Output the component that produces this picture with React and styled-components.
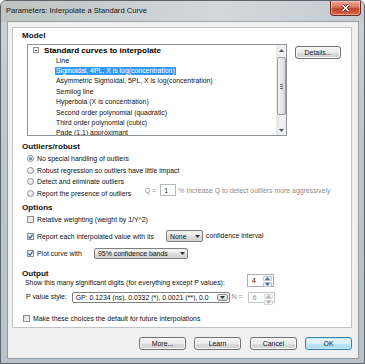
import React from "react";
import styled, { createGlobalStyle } from "styled-components";

const GlobalStyle = createGlobalStyle`
  html, body {
    margin: 0;
    padding: 0;
    background: #ffffff;
  }
  body {
    font-family: "Liberation Sans", Arial, sans-serif;
    color: #000;
  }
`;

const Window = styled.div`
  width: 365px;
  height: 364px;
  box-sizing: border-box;
  border: 1px solid #5d646b;
  border-radius: 6px 6px 0 0;
  background: linear-gradient(180deg, #cdd3d8 0%, #c0c7ce 30%, #b9c1c9 100%);
  display: flex;
  flex-direction: column;
  padding: 0 6px 5px 7px;
  overflow: hidden;
`;

const TitleBar = styled.div`
  height: 21px;
  margin: 0 -6px 0 -7px;
  padding: 0 3px 0 5px;
  display: flex;
  align-items: flex-start;
  justify-content: space-between;
  background: linear-gradient(90deg, #bcc5bf 0%, #c9cfd2 35%, #d3d8dc 60%, #c4cbd1 100%);
`;

const Title = styled.div`
  font-size: 7.6px;
  line-height: 20px;
  color: #111;
`;

const CloseButton = styled.div`
  width: 31px;
  height: 15px;
  box-sizing: border-box;
  border: 1px solid #6e2a1d;
  border-top: none;
  border-radius: 0 0 4px 4px;
  background: linear-gradient(180deg, #eaa898 0%, #d97b63 42%, #c5432a 56%, #d9654c 100%);
  box-shadow: inset 0 0 0 1px rgba(255, 215, 205, 0.55);
  display: flex;
  align-items: center;
  justify-content: center;
`;

const Client = styled.div`
  flex: 1;
  background: #f0f0f0;
  box-shadow: 0 0 0 1px rgba(70, 80, 90, 0.35);
  padding: 5px 6px 0 4px;
  display: flex;
  flex-direction: column;
`;

const Panel = styled.div`
  height: 301px;
  box-sizing: border-box;
  background: #ffffff;
  border: 1px solid #bfc4c9;
  padding: 3px 0 0 9px;
  display: flex;
  flex-direction: column;
  font-size: 6.9px;
`;

const Heading = styled.div`
  font-weight: bold;
  font-size: 8.1px;
  line-height: ${(p) => p.$lh || 10}px;
  height: ${(p) => p.$lh || 10}px;
  color: #111;
  margin-top: ${(p) => p.$mt || 0}px;
`;

const ModelRow = styled.div`
  display: flex;
  align-items: flex-start;
  margin: 3px 0 0 5px;
`;

const ListBox = styled.div`
  width: 260px;
  height: 92px;
  box-sizing: border-box;
  border: 1px solid #8e949b;
  display: flex;
  background: #fff;
`;

const ListContent = styled.div`
  flex: 1;
  overflow: hidden;
`;

const TreeRoot = styled.div`
  height: 10.4px;
  display: flex;
  align-items: center;
  padding-left: 5px;
  font-weight: bold;
  font-size: 8.1px;
`;

const Expander = styled.span`
  width: 6px;
  height: 6px;
  box-sizing: border-box;
  border: 1px solid #919191;
  margin-right: 5px;
  display: flex;
  align-items: center;
  justify-content: center;
  &::after {
    content: "";
    width: 2px;
    height: 1px;
    background: #333;
  }
`;

const TreeItem = styled.div`
  height: 10.4px;
  display: flex;
  align-items: center;
  padding-left: 27px;
  white-space: nowrap;
`;

const ItemText = styled.span`
  padding: 0 1px;
  line-height: 8px;
  background: ${(p) => (p.$selected ? "#3399ff" : "transparent")};
  color: ${(p) => (p.$selected ? "#ffffff" : "#111")};
`;

const ScrollBar = styled.div`
  width: 9px;
  display: flex;
  flex-direction: column;
  background: linear-gradient(90deg, #e3e3e3, #f2f2f2 40%, #eeeeee);
  border-left: 1px solid #ececec;
`;

const ScrollArrow = styled.div`
  height: 10px;
  display: flex;
  align-items: center;
  justify-content: center;
`;

const Thumb = styled.div`
  height: 58px;
  margin: 2px 0 0;
  box-sizing: border-box;
  border: 1px solid #9a9a9a;
  border-radius: 2px;
  background: linear-gradient(90deg, #f4f4f4, #e6e6e6 50%, #d6d6d6);
  display: flex;
  flex-direction: column;
  align-items: center;
  justify-content: center;
  gap: 1px;
`;

const Grip = styled.span`
  width: 3px;
  height: 1px;
  background: #6e6e6e;
`;

const Track = styled.div`
  flex: 1;
`;

const Button = styled.div`
  width: ${(p) => p.$w || 47}px;
  height: 13px;
  box-sizing: border-box;
  border: 1px solid ${(p) => (p.$default ? "#3c7fb1" : "#707070")};
  border-radius: 3px;
  background: ${(p) =>
    p.$default
      ? "linear-gradient(180deg, #eaf6fd 0%, #d9f0fc 50%, #bee6fd 50%, #a7d9f5 100%)"
      : "linear-gradient(180deg, #f3f3f3 0%, #ebebeb 50%, #dddddd 50%, #cfcfcf 100%)"};
  box-shadow: inset 0 0 0 1px ${(p) => (p.$default ? "#c9eafc" : "#fbfbfb")};
  display: flex;
  align-items: center;
  justify-content: center;
  font-size: 6.9px;
  color: #111;
  margin: ${(p) => p.$m || "0"};
`;

const Choices = styled.div`
  display: flex;
  flex-direction: column;
  margin-top: ${(p) => p.$mt || 0}px;
`;

const ChoiceRow = styled.div`
  display: flex;
  align-items: center;
  height: ${(p) => p.$h || 11.5}px;
  margin-top: ${(p) => p.$mt || 0}px;
  padding-left: ${(p) => (p.$pl === undefined ? 5 : p.$pl)}px;
  white-space: nowrap;
`;

const Radio = styled.span`
  width: 7px;
  height: 7px;
  box-sizing: border-box;
  border-radius: 50%;
  border: 1px solid #8a8f94;
  background: radial-gradient(circle at 40% 35%, #ffffff, #dcdcdc);
  display: flex;
  align-items: center;
  justify-content: center;
  flex-shrink: 0;
  &::after {
    content: "";
    width: 3px;
    height: 3px;
    border-radius: 50%;
    background: ${(p) => (p.$on ? "radial-gradient(circle at 40% 35%, #7ab3e8, #1c5a96)" : "transparent")};
  }
`;

const Check = styled.span`
  width: 7px;
  height: 7px;
  box-sizing: border-box;
  border: 1px solid #8a8f94;
  background: linear-gradient(135deg, #dedede, #f8f8f8);
  display: flex;
  align-items: center;
  justify-content: center;
  flex-shrink: 0;
`;

const Label = styled.span`
  margin-left: 3px;
  color: ${(p) => (p.$disabled ? "#8d8d8d" : "#111")};
  width: ${(p) => (p.$w ? `${p.$w}px` : "auto")};
  flex-shrink: 0;
`;

const Plain = styled.span`
  color: ${(p) => (p.$disabled ? "#8d8d8d" : "#111")};
  margin-left: ${(p) => p.$ml || 0}px;
  width: ${(p) => (p.$w ? `${p.$w}px` : "auto")};
  line-height: 8px;
  align-self: ${(p) => (p.$bottom ? "flex-end" : "center")};
  flex-shrink: 0;
`;

const QGroup = styled.div`
  display: flex;
  align-items: center;
  margin-bottom: 6px;
  color: #8d8d8d;
`;

const SmallBox = styled.span`
  width: ${(p) => p.$w}px;
  height: 12px;
  box-sizing: border-box;
  border: 1px solid #b5b9bd;
  background: #fff;
  display: flex;
  align-items: center;
  padding-left: 3px;
  margin: 0 2px 0 ${(p) => p.$ml || 0}px;
  color: #333;
`;

const Combo = styled.div`
  width: ${(p) => p.$w}px;
  height: ${(p) => p.$h || 12}px;
  box-sizing: border-box;
  border: 1px solid #7f7f7f;
  border-radius: 2px;
  background: ${(p) =>
    p.$field
      ? "#ffffff"
      : "linear-gradient(180deg, #f4f4f4 0%, #ebebeb 50%, #dedede 50%, #d2d2d2 100%)"};
  display: flex;
  align-items: center;
  margin-left: ${(p) => p.$ml || 0}px;
  flex-shrink: 0;
  overflow: hidden;
`;

const ComboText = styled.span`
  flex: 1;
  padding-left: 3px;
  overflow: hidden;
  white-space: nowrap;
  color: #111;
`;

const ComboArrow = styled.span`
  width: ${(p) => (p.$field ? 9 : 10)}px;
  align-self: stretch;
  display: flex;
  align-items: center;
  justify-content: center;
  margin: ${(p) => (p.$field ? "1px" : "0")};
  border-radius: 2px;
  border: ${(p) => (p.$field ? "1px solid #8c8c8c" : "none")};
  background: ${(p) =>
    p.$field ? "linear-gradient(180deg, #f4f4f4, #e2e2e2 50%, #d3d3d3)" : "transparent"};
`;

const Spinner = styled.div`
  width: 27px;
  height: ${(p) => p.$h}px;
  box-sizing: border-box;
  border: 1px solid ${(p) => (p.$disabled ? "#c3c6c9" : "#abadb3")};
  background: #fff;
  display: flex;
  margin-left: ${(p) => p.$ml || 0}px;
  flex-shrink: 0;
`;

const SpinValue = styled.span`
  flex: 1;
  display: flex;
  align-items: center;
  padding-left: 4px;
  color: ${(p) => (p.$disabled ? "#8d8d8d" : "#111")};
`;

const SpinButtons = styled.div`
  width: 9px;
  display: flex;
  flex-direction: column;
  gap: 1px;
  padding: 1px;
`;

const SpinButton = styled.span`
  flex: 1;
  border: 1px solid ${(p) => (p.$disabled ? "#d6d6d6" : "#b8c9d9")};
  border-radius: 1px;
  background: ${(p) =>
    p.$disabled ? "#f4f4f4" : "linear-gradient(180deg, #f2f8fd, #dbe9f6)"};
  display: flex;
  align-items: center;
  justify-content: center;
`;

const FormRow = styled.div`
  display: flex;
  align-items: center;
  height: ${(p) => p.$h}px;
  margin-top: ${(p) => p.$mt || 0}px;
  padding-left: ${(p) => p.$pl || 0}px;
  white-space: nowrap;
`;

const ButtonRow = styled.div`
  display: flex;
  justify-content: flex-end;
  margin-top: 9px;
`;

const Tri = ({ up, color = "#333" }) => (
  <svg width="5" height="3" viewBox="0 0 5 3">
    <path d={up ? "M0 3 L2.5 0 L5 3 Z" : "M0 0 L5 0 L2.5 3 Z"} fill={color} />
  </svg>
);

const CheckMark = () => (
  <svg width="5" height="5" viewBox="0 0 5 5">
    <path d="M0.5 2.6 L2 4.2 L4.6 0.6" fill="none" stroke="#2b4f8e" strokeWidth="1.1" />
  </svg>
);

const Choice = ({ on, children, w }) => (
  <>
    <Radio $on={on} />
    <Label $w={w}>{children}</Label>
  </>
);

const CheckBox = ({ on }) => <Check>{on && <CheckMark />}</Check>;

const curves = [
  "Line",
  "Sigmoidal, 4PL, X is log(concentration)",
  "Asymmetric Sigmoidal, 5PL, X is log(concentration)",
  "Semilog line",
  "Hyperbola (X is concentration)",
  "Second order polynomial (quadratic)",
  "Third order polynomial  (cubic)",
  "Pade (1,1) approximant",
];

export default function App() {
  return (
    <>
      <GlobalStyle />
      <Window>
        <TitleBar>
          <Title>Parameters: Interpolate a Standard Curve</Title>
          <CloseButton>
            <svg width="9" height="8" viewBox="0 0 9 8">
              <path d="M1.5 1 L7.5 7 M7.5 1 L1.5 7" stroke="#5a1d12" strokeWidth="3" />
              <path d="M1.5 1 L7.5 7 M7.5 1 L1.5 7" stroke="#ffffff" strokeWidth="1.6" />
            </svg>
          </CloseButton>
        </TitleBar>

        <Client>
          <Panel>
            <Heading>Model</Heading>
            <ModelRow>
              <ListBox>
                <ListContent>
                  <TreeRoot>
                    <Expander />
                    Standard curves to interpolate
                  </TreeRoot>
                  {curves.map((c, i) => (
                    <TreeItem key={c}>
                      <ItemText $selected={i === 1}>{c}</ItemText>
                    </TreeItem>
                  ))}
                </ListContent>
                <ScrollBar>
                  <ScrollArrow>
                    <Tri up color="#555" />
                  </ScrollArrow>
                  <Thumb>
                    <Grip />
                    <Grip />
                    <Grip />
                  </Thumb>
                  <Track />
                  <ScrollArrow>
                    <Tri color="#555" />
                  </ScrollArrow>
                </ScrollBar>
              </ListBox>
              <Button $w={46} $m="2px 0 0 8px">Details...</Button>
            </ModelRow>

            <Heading $mt={6}>Outliers/robust</Heading>
            <Choices $mt={1}>
              <ChoiceRow>
                <Choice on>No special handling of outliers</Choice>
              </ChoiceRow>
              <ChoiceRow>
                <Choice>Robust regression so outliers have little impact</Choice>
              </ChoiceRow>
              <ChoiceRow>
                <Choice>Detect and eliminate outliers</Choice>
              </ChoiceRow>
              <ChoiceRow>
                <Choice w={108}>Report the presence of outliers</Choice>
                <QGroup>
                  <span>Q =</span>
                  <SmallBox $w={16} $ml={4}>1</SmallBox>
                  <span>% Increase Q to detect outliers more aggressively</span>
                </QGroup>
              </ChoiceRow>
            </Choices>

            <Heading $mt={3.5}>Options</Heading>
            <ChoiceRow $h={12} $mt={0.6}>
              <CheckBox />
              <Label>Relative weighting (weight by 1/Y^2)</Label>
            </ChoiceRow>
            <ChoiceRow $h={12} $mt={5}>
              <CheckBox on />
              <Label $w={129}>Report each interpolated value with its</Label>
              <Combo $w={37}>
                <ComboText>None</ComboText>
                <ComboArrow>
                  <Tri />
                </ComboArrow>
              </Combo>
              <Plain $ml={3}>confidence interval</Plain>
            </ChoiceRow>
            <ChoiceRow $h={12} $mt={5}>
              <CheckBox on />
              <Label $w={57}>Plot curve with</Label>
              <Combo $w={94} $h={11}>
                <ComboText>95% confidence bands</ComboText>
                <ComboArrow>
                  <Tri />
                </ComboArrow>
              </Combo>
            </ChoiceRow>

            <Heading $mt={11.2} $lh={7}>Output</Heading>
            <FormRow $h={13} $mt={-3.5} $pl={3}>
              <Plain $w={222} $bottom>
                Show this many significant digits (for everything except P values):
              </Plain>
              <Spinner $h={13}>
                <SpinValue>4</SpinValue>
                <SpinButtons>
                  <SpinButton>
                    <Tri up color="#4a6f96" />
                  </SpinButton>
                  <SpinButton>
                    <Tri color="#4a6f96" />
                  </SpinButton>
                </SpinButtons>
              </Spinner>
            </FormRow>
            <FormRow $h={11} $mt={5} $pl={4}>
              <Plain $w={45.7}>P value style:</Plain>
              <Combo $w={158} $h={11} $field>
                <ComboText>GP: 0.1234 (ns), 0.0332 (*), 0.0021 (**), 0.0</ComboText>
                <ComboArrow $field>
                  <Tri />
                </ComboArrow>
              </Combo>
              <Plain $disabled $ml={2} $w={16}>
                N =
              </Plain>
              <Spinner $h={11} $disabled>
                <SpinValue $disabled>6</SpinValue>
                <SpinButtons>
                  <SpinButton $disabled>
                    <Tri up color="#b0b0b0" />
                  </SpinButton>
                  <SpinButton $disabled>
                    <Tri color="#b0b0b0" />
                  </SpinButton>
                </SpinButtons>
              </Spinner>
            </FormRow>
            <ChoiceRow $h={8} $mt={11.3} $pl={1}>
              <CheckBox />
              <Label>Make these choices the default for future interpolations</Label>
            </ChoiceRow>
          </Panel>

          <ButtonRow>
            <Button>More...</Button>
            <Button $m="0 0 0 8px">Learn</Button>
            <Button $m="0 0 0 9px">Cancel</Button>
            <Button $default $m="0 0 0 8px">
              OK
            </Button>
          </ButtonRow>
        </Client>
      </Window>
    </>
  );
}
